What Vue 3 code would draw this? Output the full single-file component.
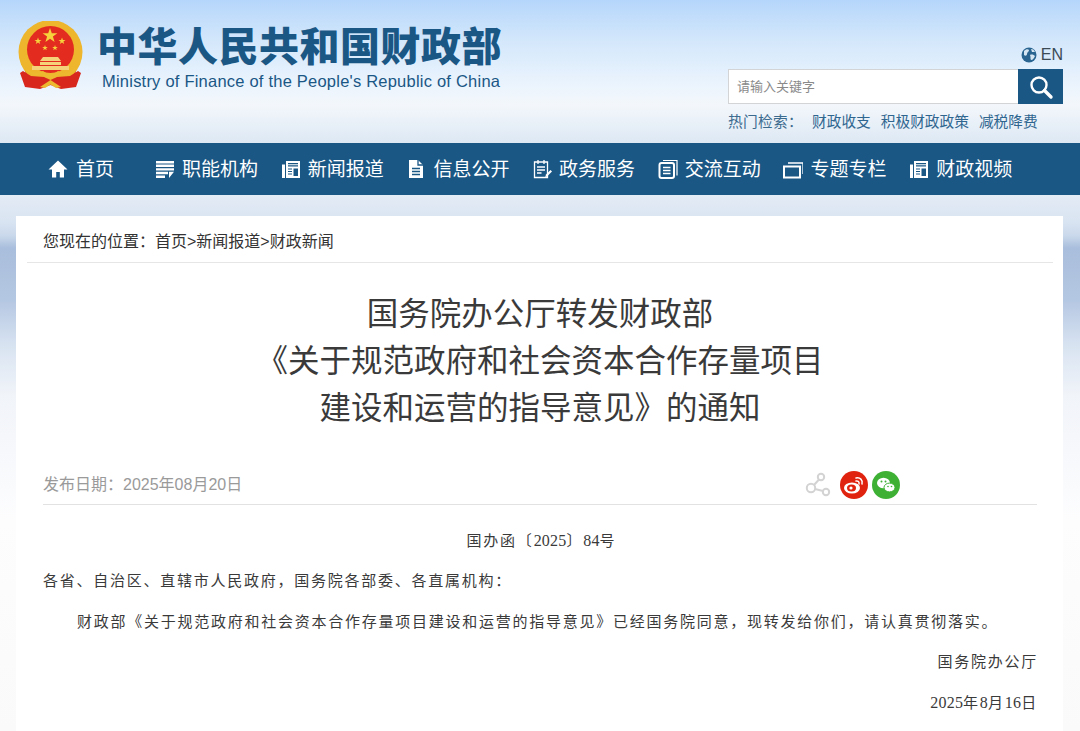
<template>
  <div class="page">
    <header class="top">
      <div class="brand">
        <svg class="emblem" width="65" height="69" viewBox="0 0 65 69">
          <path d="M10 46L7 49l2 16 13 2 10.500-4 10.500 4 13-2 2-16-3-3z" fill="#d8281e" />
          <circle cx="32.500" cy="31" r="32" fill="#edb62c" />
          <circle cx="32.500" cy="28.500" r="23.500" fill="#e32b20" />
          <path d="M32 7l1.800 5.300h5.600l-4.500 3.300 1.700 5.400-4.600-3.300-4.600 3.300 1.700-5.400-4.500-3.300h5.600z" fill="#f6d23c" />
          <path d="M20 16.500l.9 2.500h2.600l-2.100 1.600.8 2.500-2.200-1.500-2.200 1.500.8-2.500-2.100-1.600h2.600zM44 16.500l.9 2.500h2.600l-2.100 1.600.8 2.500-2.200-1.500-2.200 1.500.8-2.500-2.100-1.600h2.600zM27 24l.7 2h2.100l-1.700 1.300.6 2-1.700-1.200-1.700 1.200.6-2-1.700-1.300h2.100zM37 24l.7 2h2.100l-1.700 1.300.6 2-1.700-1.200-1.700 1.200.6-2-1.700-1.300h2.100z" fill="#f6d23c" />
          <path d="M25 36h15l3 4H22zM22 41h21v3H22zM14 45h37v4H14z" fill="#f5d27a" />
          <path d="M5 50L2 52l5 14 15 2 10.500-4 10.500 4 15-2 5-14-3-2-8 5-13 1-6.500 3-6.500-3-13-1z" fill="#d8281e" />
          <path d="M7 46c7 7 13 6 18 4 2.500 2 5 3 7.500 3s5-1 7.500-3c5 2 11 3 18-4l-2 5c-6 5-11 4-15 3-3 2.500-6 3.500-8.500 3.500S27 56.500 24 54c-4 1-9 2-15-3z" fill="#edb92f" />
          <path d="M22 66l10.500-7 10.500 7-5 1-5.500-3.500L27 67z" fill="#edb92f" />
        </svg>
        <div class="brand-text">
          <div class="brand-cn">中华人民共和国财政部</div>
          <div class="brand-en">Ministry of Finance of the People's Republic of China</div>
        </div>
      </div>
      <div class="tools">
        <div class="lang">
          <svg width="16" height="16" viewBox="0 0 16 16">
            <circle cx="8" cy="8" r="7.500" fill="#2a6592" />
            <path d="M3 4c2-2 4-2 5-1 0 2-2 2-2 4s-2 2-3 1zM9 8c2-1 4 0 5 1-1 2-2 4-4 4-1-1 0-3-1-5zM10 2c2 0 3 1 4 3l-3 0z" fill="#d6e6f2" />
          </svg>
          <span>EN</span>
        </div>
        <div class="search">
          <input class="search-input" placeholder="请输入关键字" />
          <button class="search-btn" aria-label="搜索">
            <svg width="26" height="26" viewBox="0 0 26 26" fill="none" stroke="#fff">
              <circle cx="11" cy="11" r="7.500" stroke-width="2.400" />
              <path d="M16.500 16.500L23 23" stroke-width="3.400" stroke-linecap="round" />
            </svg>
          </button>
        </div>
        <div class="hot">
          <span class="hot-label">热门检索：</span>
          <a v-for="w in hotWords" :key="w" class="hot-link">{{ w }}</a>
        </div>
      </div>
    </header>

    <nav class="nav">
      <a v-for="item in navItems" :key="item.label" class="nav-item" :class="{ home: item.home }">
        <svg width="20" height="20" viewBox="0 0 20 20" class="nav-icon" v-html="item.icon"></svg>
        <span class="nav-label">{{ item.label }}</span>
      </a>
    </nav>

    <main class="panel">
      <div class="crumb">您现在的位置：首页&gt;新闻报道&gt;财政新闻</div>
      <div class="article">
        <h1 class="title">
          国务院办公厅转发财政部<br />
          《关于规范政府和社会资本合作存量项目<br />
          建设和运营的指导意见》的通知
        </h1>
        <div class="meta">
          <span class="date">发布日期：2025年08月20日</span>
          <div class="share">
            <svg width="26" height="26" viewBox="0 0 26 26" fill="none" stroke="#d3d3d3" stroke-width="2">
              <circle cx="16" cy="5" r="3.200" />
              <circle cx="6" cy="16" r="4.200" />
              <circle cx="21" cy="20" r="3.200" />
              <path d="M14 7.500L9 13M10 17l8 2" />
            </svg>
            <svg class="weibo" width="28" height="28" viewBox="0 0 28 28">
              <circle cx="14" cy="14" r="14" fill="#e0230e" />
              <ellipse cx="12" cy="17" rx="8" ry="5.500" fill="#fff" />
              <ellipse cx="11.500" cy="17" rx="4.500" ry="3.500" fill="#e0230e" />
              <circle cx="11" cy="17" r="1.600" fill="#fff" />
              <path d="M16 7c4-1 7 2 6 6M16 10c2-.5 3.500 1 3 3" fill="none" stroke="#fff" stroke-width="1.500" stroke-linecap="round" />
            </svg>
            <svg width="28" height="28" viewBox="0 0 28 28">
              <circle cx="14" cy="14" r="14" fill="#3eb135" />
              <ellipse cx="11.500" cy="12" rx="6.500" ry="5.200" fill="#fff" />
              <ellipse cx="17.500" cy="16.500" rx="5.500" ry="4.400" fill="#fff" stroke="#3eb135" />
              <circle cx="9.500" cy="10.500" r="1" fill="#3eb135" />
              <circle cx="13.500" cy="10.500" r="1" fill="#3eb135" />
              <circle cx="16" cy="15.500" r=".8" fill="#3eb135" />
              <circle cx="19.500" cy="15.500" r=".8" fill="#3eb135" />
            </svg>
          </div>
        </div>
        <div class="body">
          <p class="center">国办函〔<span class="num">2025</span>〕<span class="num">84</span>号</p>
          <p>各省、自治区、直辖市人民政府，国务院各部委、各直属机构：</p>
          <p class="indent">财政部《关于规范政府和社会资本合作存量项目建设和运营的指导意见》已经国务院同意，现转发给你们，请认真贯彻落实。</p>
          <p class="right">国务院办公厅</p>
          <p class="right"><span class="num">2025</span>年<span class="num">8</span>月<span class="num">16</span>日</p>
        </div>
      </div>
    </main>
  </div>
</template>

<script setup>
const hotWords = ['财政收支', '积极财政政策', '减税降费']

const newsIcon = '<path d="M1 5.500h3V19H1zM5 2h14v17H5z" fill="#fff"/><path d="M7 4h10v1.200H7zM7 6.200h10v1.200H7zM12.500 9.500H17v7.500h-4.500z" fill="#1a5785"/><path d="M7 10h4M7 12.500h4M7 15h4" stroke="#1a5785" stroke-width="1.200"/>'

const navItems = [
  { label: '首页', home: true, icon: '<path d="M10 1.500L.5 10.500h3.500v8h4.200v-5.500h3.600v5.500H16v-8h3.500z" fill="#fff"/>' },
  { label: '职能机构', icon: '<path d="M1 2h18v2.400H1zM1 5.600h18V8H1zM1 9.200h18v2.400H1zM1 12.800h12v2.400H1zM1 16.400h9V19H1zM14 12.800h5L14 19z" fill="#fff"/>' },
  { label: '新闻报道', icon: newsIcon },
  { label: '信息公开', icon: '<path d="M3 1h9l5 5v13H3z" fill="#fff"/><path d="M12 1v5h5M6 9.500h8M6 12.500h8M6 15.500h8" fill="none" stroke="#1a5785" stroke-width="1.300"/>' },
  { label: '政务服务', icon: '<path d="M2.500 3h13v15.500h-13zM6 1v4M12 1v4M5 8h8M5 11h8M5 14h4.500" fill="none" stroke="#fff" stroke-width="1.300"/><path d="M13 19l1-3.500 4.500-4.500 1.500 1.500-4.500 4.500z" fill="#fff"/>' },
  { label: '交流互动', icon: '<path d="M5 1.500h14v15" fill="none" stroke="#fff" stroke-width="1.200"/><rect x="1.500" y="4" width="14.500" height="15" rx="2" fill="none" stroke="#fff" stroke-width="2"/><path d="M5 8.500h7.500M5 11.500h7.500M5 14.500h7.500" stroke="#fff" stroke-width="1.400"/>' },
  { label: '专题专栏', icon: '<rect x="1" y="7.500" width="16" height="11" fill="none" stroke="#fff" stroke-width="2"/><path d="M5 4h15v11" fill="none" stroke="#fff" stroke-width="1.300"/>' },
  { label: '财政视频', icon: newsIcon }
]
</script>

<style>
body {
  background: #fff;
}
</style>

<style scoped>
.page {
  width: 1080px;
  height: 731px;
  overflow: hidden;
  font-family: "Liberation Sans", "Noto Sans CJK SC", sans-serif;
  background: linear-gradient(180deg, #e3ebf5 195px, #d9e4f2 222px, #c9d8eb 236px, #a9bedc 248px, #b4c7e2 300px, #d8e3f1 345px, #f1f4f9 395px, #fdfdfe 520px, #fafafa 731px);
}

.top {
  height: 143px;
  box-sizing: border-box;
  padding: 21px 17px 0 18px;
  display: flex;
  justify-content: space-between;
  background: linear-gradient(180deg, #b5d6fb 0, #d3e7fb 40px, #ebf4fd 85px, #f3f7fb 105px, #dde8f4 143px);
}

.brand {
  display: flex;
  gap: 14px;
}

.brand-text {
  padding-top: 3px;
}

.brand-cn {
  font-size: 40px;
  line-height: 46px;
  font-weight: 900;
  letter-spacing: 0.5px;
  color: #1a5785;
}

.brand-en {
  margin-top: 1px;
  margin-left: 5px;
  font-size: 16.500px;
  line-height: 20px;
  letter-spacing: 0.22px;
  color: #1a5785;
}

.tools {
  width: 335px;
  display: flex;
  flex-direction: column;
  align-items: flex-end;
}

.lang {
  margin-top: 24px;
  display: flex;
  align-items: center;
  gap: 4px;
  font-size: 16px;
  line-height: 20px;
  color: #3c4a55;
}

.search {
  margin-top: 4px;
  width: 335px;
  height: 35px;
  display: flex;
}

.search-input {
  flex: 1;
  min-width: 0;
  box-sizing: border-box;
  padding: 0 8px;
  border: 1px solid #d2d4d6;
  border-right: none;
  background: #fff;
  font-family: inherit;
  font-size: 13px;
  outline: none;
}

.search-input::placeholder {
  color: #8a8a8a;
}

.search-btn {
  width: 45px;
  padding: 0;
  border: none;
  background: #1a5785;
  display: flex;
  align-items: center;
  justify-content: center;
}

.hot {
  width: 335px;
  margin-top: 8px;
  display: flex;
  font-size: 14.700px;
  line-height: 20px;
  color: #3b6a8f;
}

.hot-label {
  width: 84px;
  letter-spacing: 0.3px;
}

.hot-link {
  margin-right: 10px;
  color: #2f6690;
}

.nav {
  height: 52px;
  box-sizing: border-box;
  padding-left: 48px;
  display: flex;
  align-items: center;
  background: #1a5785;
}

.nav-item {
  width: 125.700px;
  display: flex;
  align-items: center;
  gap: 7px;
  color: #fff;
  font-size: 19px;
}

.nav-item.home {
  width: 107px;
  gap: 8px;
}

.nav-label {
  margin-bottom: 4px;
}

.panel {
  margin: 21px 17px 0 16px;
  height: 515px;
  padding: 0 10px 0 11px;
  background: #fff;
}

.crumb {
  height: 47px;
  box-sizing: border-box;
  padding-left: 16px;
  border-bottom: 1px solid #e6e6e6;
  line-height: 52px;
  font-size: 16px;
  color: #333;
}

.article {
  padding: 0 16px;
}

.title {
  margin: 28px 0 0;
  font-size: 31.500px;
  line-height: 47px;
  font-weight: 400;
  text-align: center;
  color: #3a3a3a;
}

.meta {
  margin-top: 25px;
  height: 48px;
  box-sizing: border-box;
  padding-top: 5px;
  border-bottom: 1px solid #e2e2e2;
  display: flex;
  align-items: center;
  position: relative;
}

.date {
  font-size: 16px;
  color: #9a9a9a;
}

.share {
  position: absolute;
  left: 762px;
  top: 14px;
  display: flex;
  gap: 4px;
  align-items: center;
}

.weibo {
  margin-left: 5px;
}

.body {
  padding-top: 7px;
  color: #3a3a3a;
  font-family: "Liberation Serif", "Noto Sans CJK SC", serif;
  font-size: 15px;
  letter-spacing: 1.750px;
  line-height: 24px;
}

.body p {
  margin: 0;
  padding-top: 16.500px;
}

.num {
  font-size: 16px;
  letter-spacing: 0.2px;
}

.center {
  text-align: center;
  padding-left: 3px;
}

.indent {
  text-indent: 34px;
  white-space: nowrap;
}

.right {
  text-align: right;
  margin-right: -1px !important;
}
</style>
